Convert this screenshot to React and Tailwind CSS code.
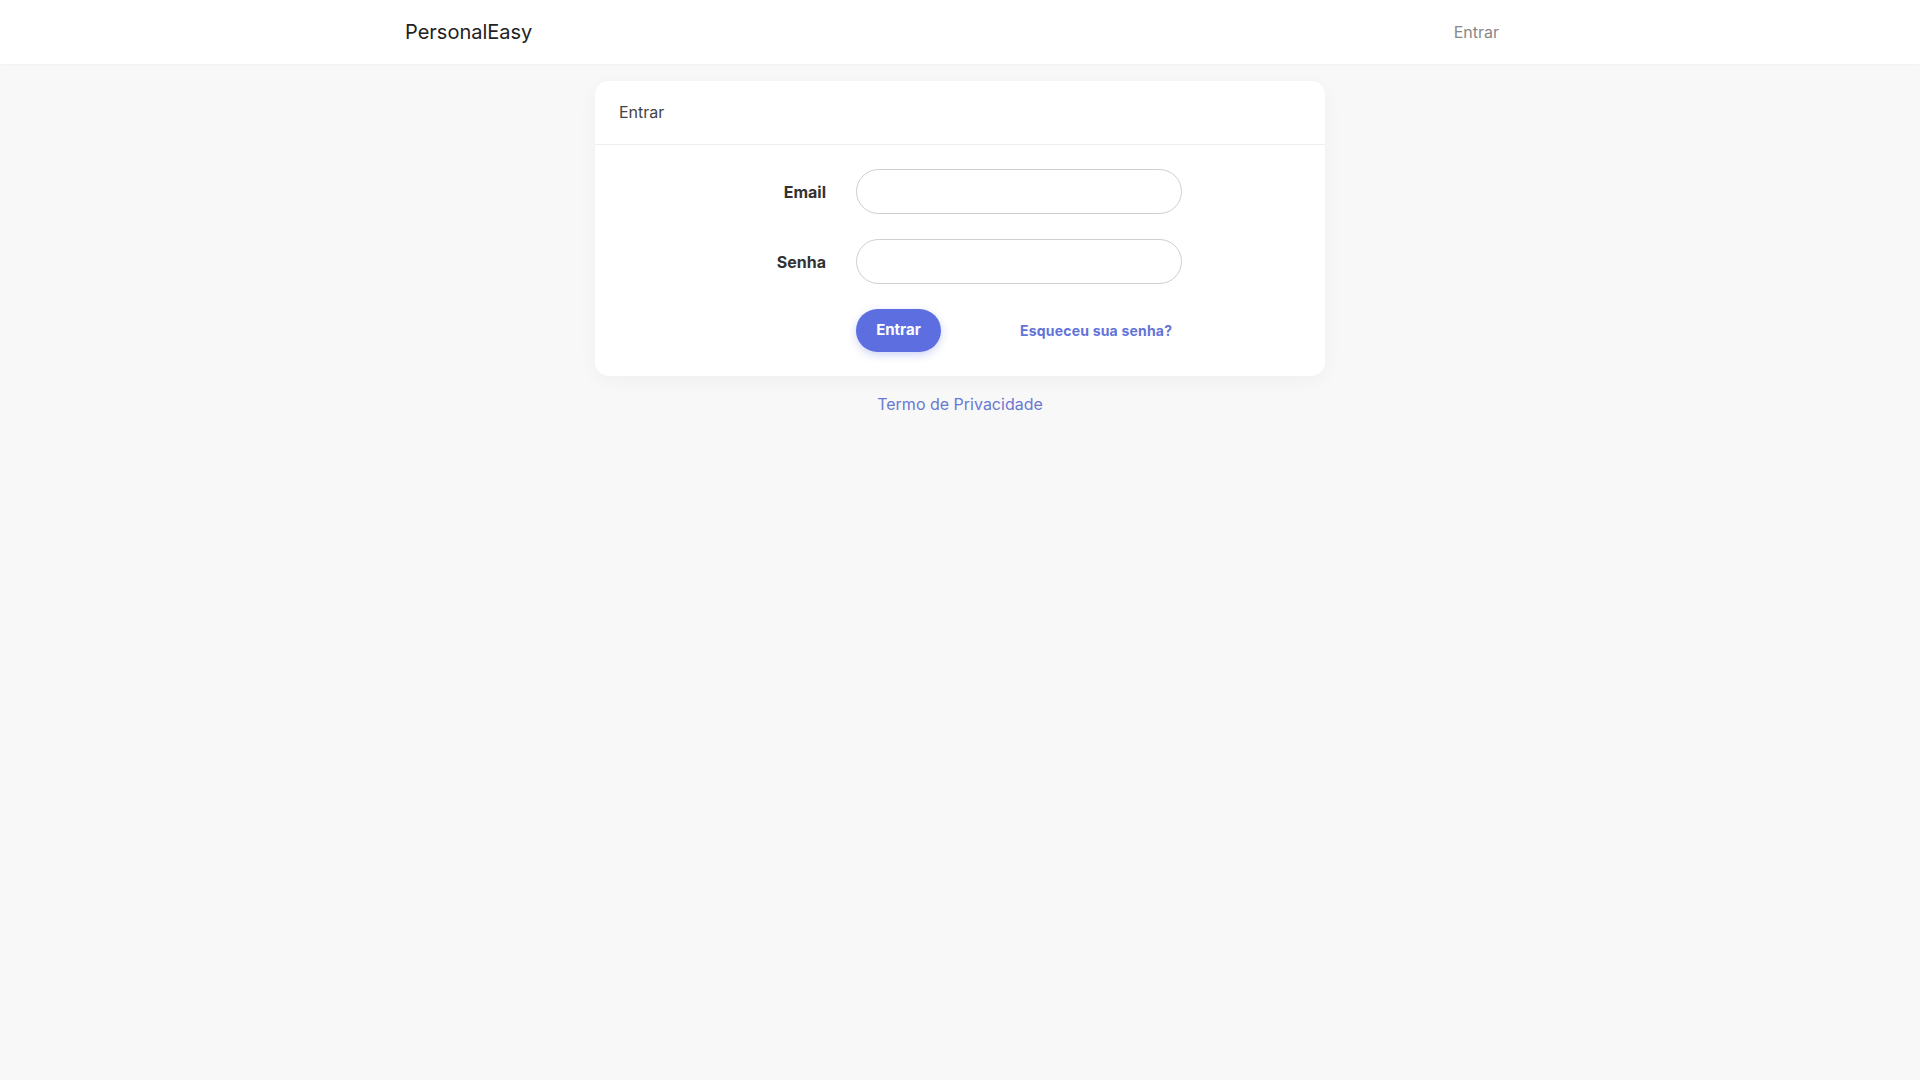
export default function App() {
  return (
    <div className="min-h-screen bg-[#f8f8f8] font-['Inter',sans-serif]">
      <nav className="h-16 bg-white shadow-[0_1px_2px_rgba(0,0,0,0.03)]">
        <div className="mx-auto flex h-full w-[1110px] items-center justify-between">
          <span className="text-[20px] text-[#222]">PersonalEasy</span>
          <a className="pr-4 text-[16px] text-[#888]">Entrar</a>
        </div>
      </nav>
      <main className="pt-[17px]">
        <div className="mx-auto w-[730px] rounded-[14px] bg-white shadow-[0_4px_20px_rgba(0,0,0,0.04)]">
          <div className="flex h-[64px] items-center border-b border-[#eeeeee] px-6 pb-[1px] text-[16px] text-[#444]">
            Entrar
          </div>
          <div className="flex flex-col gap-[25px] pb-6 pt-6">
            <div className="flex items-center">
              <label className="w-[231px] text-right text-[16px] font-bold text-[#333]">Email</label>
              <input type="email" className="ml-[30px] h-[45px] w-[326px] rounded-full border border-[#cfcfcf] bg-white px-4 outline-none" />
            </div>
            <div className="flex items-center">
              <label className="w-[231px] text-right text-[16px] font-bold text-[#333]">Senha</label>
              <input type="password" className="ml-[30px] h-[45px] w-[326px] rounded-full border border-[#cfcfcf] bg-white px-4 outline-none" />
            </div>
            <div className="flex items-center pl-[261px]">
              <button className="h-[43px] w-[85px] rounded-full bg-[#5d6fe0] text-[15px] font-bold text-white shadow-[0_3px_8px_rgba(93,111,224,0.3)]">
                Entrar
              </button>
              <a className="ml-[79px] text-[14px] font-bold tracking-[0.2px] text-[#6273d8]">Esqueceu sua senha?</a>
            </div>
          </div>
        </div>
        <div className="mt-4 text-center">
          <a className="text-[16px] text-[#6a78d2]">Termo de Privacidade</a>
        </div>
      </main>
    </div>
  );
}
